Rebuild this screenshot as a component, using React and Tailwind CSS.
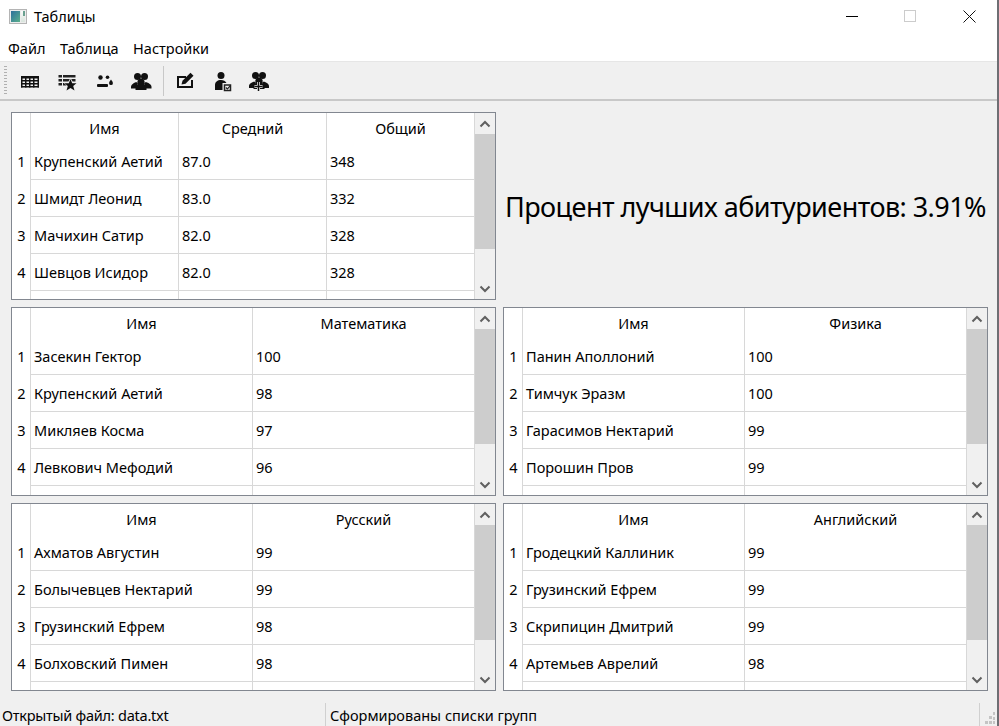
import React from "react";

const FONT = "font-['Noto_Sans','Liberation_Sans',sans-serif]";

const GridIcon = () => (
  <svg width="24" height="24" viewBox="0 0 24 24" fill="#111">
    <rect x="3" y="7" width="18" height="2.5" />
    <rect x="3" y="11" width="18" height="1.5" />
    <rect x="3" y="14" width="18" height="1.5" />
    <rect x="3" y="17" width="18" height="1.5" />
    <rect x="3" y="7" width="1.5" height="11.5" />
    <rect x="7" y="7" width="1.5" height="11.5" />
    <rect x="11" y="7" width="1.5" height="11.5" />
    <rect x="15" y="7" width="1.5" height="11.5" />
    <rect x="19.5" y="7" width="1.5" height="11.5" />
  </svg>
);

const ListStarIcon = () => (
  <svg width="24" height="24" viewBox="0 0 24 24" fill="#222">
    <rect x="3.5" y="6" width="3.5" height="2.5" />
    <rect x="8" y="6" width="12.500" height="2.5" />
    <rect x="3.5" y="10" width="3.5" height="2.5" />
    <rect x="8" y="10" width="12.500" height="2.5" />
    <rect x="3.5" y="14" width="3.5" height="2.5" />
    <rect x="8" y="14" width="3.500" height="2.5" />
    <polygon fill="#f0f0f0" points="15.500,8.500 17.800,13.300 23,13.300 19,16.800 20.500,22.500 15.500,19.500 10.500,22.500 12,16.800 8,13.300 13.200,13.300" />
    <polygon fill="#111" points="15.500,10 17.200,14.300 21.500,14.300 18.200,17 19.500,21.500 15.500,19 11.500,21.500 12.800,17 9.500,14.300 13.800,14.300" />
  </svg>
);

const TwoDotsIcon = () => (
  <svg width="24" height="24" viewBox="0 0 24 24" fill="#111">
    <circle cx="8.500" cy="8.500" r="2.200" />
    <circle cx="15.500" cy="8.200" r="1.800" />
    <path d="M19 10.500c1.300 1.700 1.900 2.700 1.900 3.700a1.900 1.900 0 0 1-3.800 0c0-1 .6-2 1.900-3.700z" />
    <rect x="5" y="15" width="11" height="3" rx="1" />
  </svg>
);

const GroupIcon = () => (
  <svg width="24" height="24" viewBox="0 0 24 24" fill="#111">
    <circle cx="8.500" cy="7.500" r="3.500" />
    <circle cx="15.500" cy="7.500" r="3.500" />
    <path d="M2 18c0-2.500 3-4 5-5l2 1-2 5.500H2z" />
    <path d="M22.500 18c0-2.500-3-4-5.500-5l-2 1 2 5.500h5.500z" />
    <path d="M12 9.500a3.500 3.500 0 0 1 3 5.500c1.500.8 2.500 1.800 2.500 3v3h-11v-3c0-1.200 1-2.200 2.500-3a3.500 3.500 0 0 1 3-5.500z" />
  </svg>
);

const EditIcon = () => (
  <svg width="24" height="24" viewBox="0 0 24 24">
    <path d="M13 8H5v10h14v-7" fill="none" stroke="#111" strokeWidth="2" />
    <path d="M8.500 15.500l1-3.800L17.500 3.800l3 3-8 8z" fill="#111" />
  </svg>
);

const PersonCheckIcon = () => (
  <svg width="24" height="24" viewBox="0 0 24 24" fill="#111">
    <circle cx="11" cy="6.500" r="3.500" />
    <path d="M5 21v-5c0-3 2.500-5 6-5 2.500 0 4.500 1 5.500 3h-4v7z" />
    <rect x="14.500" y="16" width="6" height="5.500" fill="none" stroke="#222" strokeWidth="1.500" />
    <path d="M15.800 18.500l1.600 1.500 2.800-3.200" fill="none" stroke="#222" strokeWidth="1.200" />
  </svg>
);

const GroupPlusIcon = () => (
  <svg width="24" height="24" viewBox="0 0 24 24" fill="#111">
    <circle cx="8.500" cy="6.500" r="3.500" />
    <circle cx="15.500" cy="6.500" r="3.500" />
    <path d="M2 17c0-2.500 3-3.500 5-4.500l2 1-2 5.500H2z" />
    <path d="M22 17c0-2.500-3-3.500-5-4.500l-2 1 2 5.500h5z" />
    <path d="M12 8.500a3.500 3.500 0 0 1 3 5.500c1.500.8 2.500 1.800 2.500 3v3h-11v-3c0-1.200 1-2.200 2.500-3a3.500 3.500 0 0 1 3-5.500z" />
    <path d="M7.500 17.500h8M11.500 13v9" stroke="#f0f0f0" strokeWidth="3" />
    <path d="M7.500 17.500h8M11.500 13v9" stroke="#111" strokeWidth="1.500" />
  </svg>
);

const Chevron = ({ up }) => (
  <svg width="12" height="8" viewBox="0 0 12 8" fill="none" stroke="#606060" strokeWidth="2">
    <path d={up ? "M1.500 6.500L6 2l4.500 4.500" : "M1.500 1.500L6 6l4.500-4.500"} />
  </svg>
);

function Scrollbar() {
  return (
    <div className="w-[20px] shrink-0 flex flex-col bg-[#f0f0f0]">
      <div className="h-[21px] shrink-0 flex items-center justify-center">
        <Chevron up />
      </div>
      <div className="h-[115px] shrink-0 bg-[#cdcdcd]" />
      <div className="flex-1" />
      <div className="h-[21px] shrink-0 flex items-center justify-center">
        <Chevron />
      </div>
    </div>
  );
}

function DataTable({ headers, rows }) {
  return (
    <div className="flex h-full border border-[#828790] bg-white overflow-hidden">
      <div className="w-[19px] shrink-0 border-r border-[#d8d8d8]">
        <div className="h-[30px]" />
        {rows.map((row, i) => (
          <div key={i} className="h-[37px] flex items-center justify-center pl-px pt-[1px]">
            {i + 1}
          </div>
        ))}
      </div>
      {headers.map((header, col) => (
        <div key={col} className="flex-1 min-w-0 border-r border-[#d8d8d8]">
          <div className="h-[30px] flex items-center justify-center pt-[1px]">{header}</div>
          {rows.map((row, i) => (
            <div
              key={i}
              className="h-[37px] flex items-center pl-[3px] pt-[1px] border-b border-[#d8d8d8] whitespace-nowrap"
            >
              {row[col]}
            </div>
          ))}
          <div className="h-[37px] border-b border-[#d8d8d8]" />
        </div>
      ))}
      <Scrollbar />
    </div>
  );
}

const tables = {
  math: [
    ["Засекин Гектор", "100"],
    ["Крупенский Аетий", "98"],
    ["Микляев Косма", "97"],
    ["Левкович Мефодий", "96"],
  ],
  physics: [
    ["Панин Аполлоний", "100"],
    ["Тимчук Эразм", "100"],
    ["Гарасимов Нектарий", "99"],
    ["Порошин Пров", "99"],
  ],
  russian: [
    ["Ахматов Августин", "99"],
    ["Болычевцев Нектарий", "99"],
    ["Грузинский Ефрем", "98"],
    ["Болховский Пимен", "98"],
  ],
  english: [
    ["Гродецкий Каллиник", "99"],
    ["Грузинский Ефрем", "99"],
    ["Скрипицин Дмитрий", "99"],
    ["Артемьев Аврелий", "98"],
  ],
};

const best = [
  ["Крупенский Аетий", "87.0", "348"],
  ["Шмидт Леонид", "83.0", "332"],
  ["Мачихин Сатир", "82.0", "328"],
  ["Шевцов Исидор", "82.0", "328"],
];

const ToolButton = ({ children }) => (
  <div className="w-[37px] h-[24px] flex items-center justify-center">{children}</div>
);

export default function App() {
  return (
    <div className={`w-[999px] h-[726px] flex flex-col overflow-hidden bg-[#f0f0f0] border-r-2 border-[#6e6e73] text-black text-[14.5px] ${FONT}`}>
      {/* заголовок окна */}
      <div className="h-[38px] shrink-0 bg-white flex items-center">
        <div className="ml-[9px] w-[18px] h-[15px] flex border border-[#b4b4b4] bg-[#ececec] p-px mt-[-6px]">
          <div className="w-[9px] bg-gradient-to-br from-[#2f6f9a] to-[#5cb08a]" />
          <div className="flex-1 ml-[1px] flex justify-end bg-gradient-to-b from-[#fafafa] to-[#d8e4dc]">
            <div className="w-[2px] h-[5px] bg-[#6aa090]" />
          </div>
        </div>
        <span className="ml-[7px] mt-[-4px]">Таблицы</span>
        <div className="ml-auto flex items-center mt-[-6px] pr-[21px]">
          <div className="w-[12px] h-px bg-black mr-[46px]" />
          <div className="w-[12px] h-[12px] border border-[#cccccc] mr-[47px]" />
          <svg width="13" height="13" viewBox="0 0 13 13" stroke="#111" fill="none">
            <path d="M.5.5l12 12M12.500.5l-12 12" />
          </svg>
        </div>
      </div>

      {/* меню */}
      <div className="h-[24px] shrink-0 bg-white flex items-center pl-[8px] gap-[14.5px] pb-[2px] border-b border-[#e6e6e6]">
        <span>Файл</span>
        <span>Таблица</span>
        <span>Настройки</span>
      </div>

      {/* панель инструментов */}
      <div className="h-[39px] shrink-0 flex items-center pl-[4px] border-b-2 border-[#c8c8c8]">
        <div className="w-[3px] h-[30px] shrink-0 bg-[repeating-linear-gradient(to_bottom,#b0b0b0_0,#b0b0b0_1px,transparent_1px,transparent_3px)]" />
        <div className="w-[4.5px] shrink-0" />
        <ToolButton><GridIcon /></ToolButton>
        <ToolButton><ListStarIcon /></ToolButton>
        <ToolButton><TwoDotsIcon /></ToolButton>
        <ToolButton><GroupIcon /></ToolButton>
        <div className="w-px h-[30px] bg-[#c8c8c8] ml-[3px] mr-[3px]" />
        <ToolButton><EditIcon /></ToolButton>
        <ToolButton><PersonCheckIcon /></ToolButton>
        <ToolButton><GroupPlusIcon /></ToolButton>
      </div>

      {/* таблицы */}
      <div className="grid grid-cols-[485px_485px] grid-rows-[188px_189px_188px] gap-x-[7px] gap-y-[7px] pl-[11px] pt-[11px]">
        <DataTable headers={["Имя", "Средний", "Общий"]} rows={best} />
        <div className="flex items-center justify-center text-[27px] tracking-[-0.55px] pt-[2px] whitespace-nowrap">
          Процент лучших абитуриентов: 3.91%
        </div>
        <DataTable headers={["Имя", "Математика"]} rows={tables.math} />
        <DataTable headers={["Имя", "Физика"]} rows={tables.physics} />
        <DataTable headers={["Имя", "Русский"]} rows={tables.russian} />
        <DataTable headers={["Имя", "Английский"]} rows={tables.english} />
      </div>

      {/* строка состояния */}
      <div className="flex-1 flex items-end pl-[2px] relative">
        <div className="w-[324px] h-[23px] border-r border-[#d0d0d0] flex items-center pt-[2px] tracking-[-0.25px]">Открытый файл: data.txt</div>
        <div className="pl-[4px] h-[23px] flex items-center pt-[2px]">Сформированы списки групп</div>
        <div className="ml-auto w-px h-[23px] mr-[17px] bg-[#d0d0d0]" />
        <svg className="absolute right-[1px] bottom-[1px]" width="11" height="13" viewBox="0 0 11 13" fill="#c4c4c4">
          <rect x="8" y="0" width="2" height="3" />
          <rect x="4" y="4" width="3" height="3" />
          <rect x="8" y="5" width="2" height="3" />
          <rect x="0" y="9" width="3" height="3" />
          <rect x="4" y="9" width="3" height="3" />
          <rect x="8" y="9" width="2" height="3" />
        </svg>
      </div>
    </div>
  );
}
